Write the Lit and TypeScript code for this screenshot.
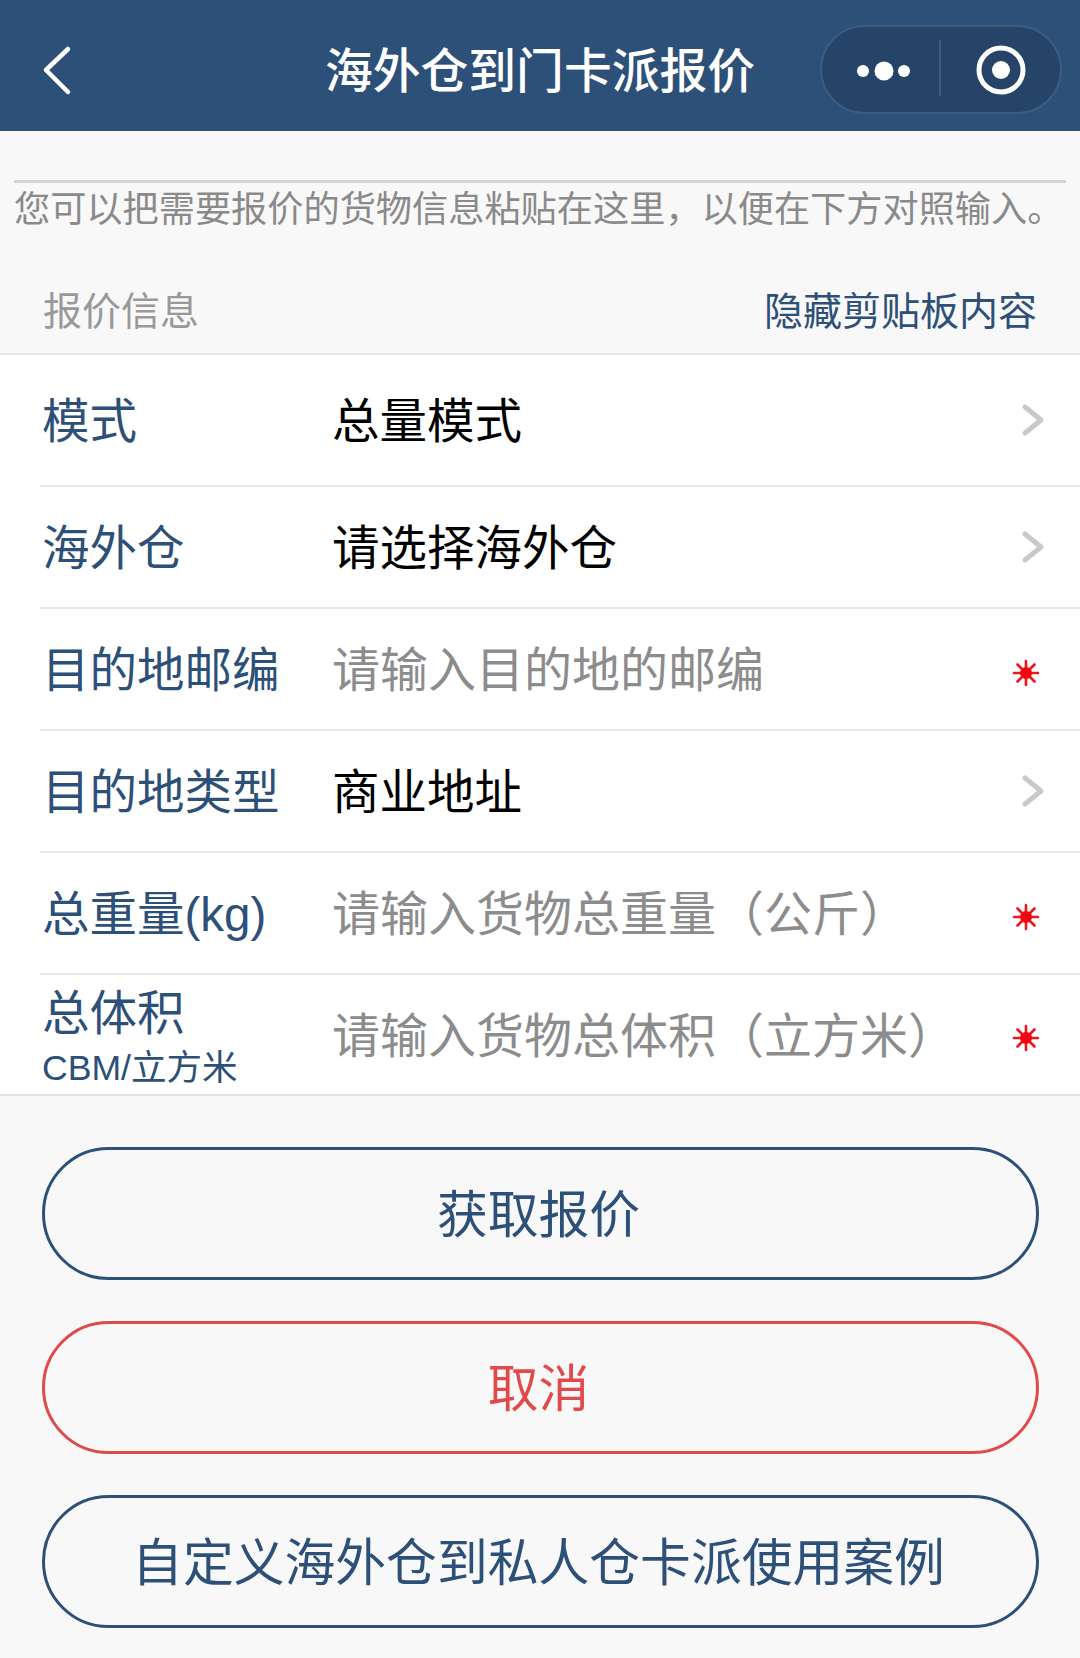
import { LitElement, html, css, svg } from "lit";
import { customElement } from "lit/decorators.js";

type Row = {
  label: string;
  sub?: string;
  value: string;
  placeholder?: boolean;
  required?: boolean;
};

const ROWS: Row[] = [
  { label: "模式", value: "总量模式" },
  { label: "海外仓", value: "请选择海外仓" },
  { label: "目的地邮编", value: "请输入目的地的邮编", placeholder: true, required: true },
  { label: "目的地类型", value: "商业地址" },
  { label: "总重量(kg)", value: "请输入货物总重量（公斤）", placeholder: true, required: true },
  { label: "总体积", sub: "CBM/立方米", value: "请输入货物总体积（立方米）", placeholder: true, required: true },
];

const chevron = html`<svg class="mark" width="26" height="36" viewBox="0 0 26 36">
  ${svg`<path d="M5 5l16 13L5 31" fill="none" stroke="#c9c9c9" stroke-width="5" stroke-linecap="round" stroke-linejoin="round" />`}
</svg>`;

const asterisk = html`<svg class="mark star" width="28" height="28" viewBox="0 0 28 28">
  ${svg`<g stroke="#f0141c" stroke-width="2.6" stroke-linecap="round">
    <path d="M14 2v24M2 14h24M5.5 5.5l17 17M22.500 5.500l-17 17" />
  </g>
  <circle cx="14" cy="14" r="6" fill="#f5050f" />`}
</svg>`;

@customElement("app-root")
export class AppRoot extends LitElement {
  static styles = css`
    :host {
      display: block;
      width: 1080px;
      height: 1658px;
      overflow: hidden;
      background: #f8f8f8;
      font-family: "Liberation Sans", "Noto Sans CJK SC", sans-serif;
    }

    .nav {
      height: 131px;
      box-sizing: border-box;
      padding-top: 4px;
      display: flex;
      align-items: center;
      justify-content: center;
      position: relative;
      background: #2d5078;
      color: #fff;
      font-size: 47.8px;
      font-weight: 500;
    }

    .back {
      position: absolute;
      left: 42px;
      top: 45px;
    }

    .capsule {
      position: absolute;
      left: 820px;
      top: 25px;
      width: 242px;
      height: 89px;
    }

    .clip {
      height: 49px;
      margin: 0 14px;
      border-bottom: 3px solid #d4d4d4;
    }

    .hint {
      padding: 0 0 0 14px;
      font-size: 36.2px;
      line-height: 54px;
      height: 54px;
      color: #8a8a8a;
      white-space: nowrap;
    }

    .section {
      height: 118px;
      box-sizing: border-box;
      padding: 45px 43px 0;
      display: flex;
      justify-content: space-between;
      font-size: 39px;
      line-height: 60px;
      color: #999;
      border-bottom: 2px solid #e6e6e6;
    }

    .section a {
      color: #2d5078;
    }

    .list {
      background: #fff;
      border-bottom: 2px solid #e2e2e2;
    }

    .row {
      height: 122px;
      margin-left: 40px;
      padding-right: 34px;
      display: flex;
      align-items: center;
      box-sizing: border-box;
      border-bottom: 2px solid #e8e8e8;
      font-size: 47.5px;
      line-height: 62px;
    }

    .row:first-child {
      height: 132px;
    }

    .row:last-child {
      height: 119px;
      border-bottom: none;
    }

    .label {
      width: 294px;
      padding: 4px 0 0 2px;
      box-sizing: border-box;
      color: #2d5078;
      white-space: nowrap;
    }

    .label small {
      display: block;
      margin-top: 4px;
      font-size: 35.6px;
      line-height: 42px;
    }

    .label span {
      display: block;
      line-height: 58px;
    }

    .value {
      flex: 1;
      padding-top: 4px;
      margin-left: -2px;
      color: #000;
      white-space: nowrap;
    }

    .value.placeholder {
      color: #8c8c8c;
      font-size: 48px;
    }

    .mark {
      display: block;
    }

    .star {
      margin-top: 7px;
      margin-right: 6px;
    }

    .actions {
      display: flex;
      flex-direction: column;
      gap: 41px;
      padding: 51px 41px 0 42px;
    }

    .btn {
      height: 133px;
      box-sizing: border-box;
      padding: 0 4px 6px 0;
      display: flex;
      align-items: center;
      justify-content: center;
      border: 3px solid #2d5078;
      border-radius: 67px;
      color: #2d5078;
      font-size: 50.8px;
    }

    .btn.cancel {
      border-color: #e04a4a;
      color: #e04a4a;
    }
  `;

  renderRow(row: Row) {
    return html`
      <div class="row">
        <div class="label">
          <span>${row.label}</span>
          ${row.sub ? html`<small>${row.sub}</small>` : ""}
        </div>
        <div class="value ${row.placeholder ? "placeholder" : ""}">${row.value}</div>
        ${row.required ? asterisk : chevron}
      </div>
    `;
  }

  render() {
    return html`
      <div class="nav">
        <svg class="back" width="32" height="52" viewBox="0 0 32 52">
          <path d="M26 4L4 25l22 22" fill="none" stroke="#fff" stroke-width="4.500" stroke-linecap="round" stroke-linejoin="round" />
        </svg>
        <span>海外仓到门卡派报价</span>
        <svg class="capsule" viewBox="0 0 242 89">
          <rect x="1" y="1" width="240" height="87" rx="43.500" fill="#264467" stroke="#3b5c85" stroke-width="2" />
          <path d="M120 15v56" stroke="#3d5c82" stroke-width="2" />
          <circle cx="43" cy="46" r="6" fill="#fff" />
          <circle cx="64" cy="46" r="9.500" fill="#fff" />
          <circle cx="84" cy="46" r="6" fill="#fff" />
          <circle cx="181" cy="45" r="22" fill="none" stroke="#fff" stroke-width="5" />
          <circle cx="181" cy="45" r="9" fill="#fff" />
        </svg>
      </div>
      <div class="clip"></div>
      <div class="hint">您可以把需要报价的货物信息粘贴在这里，以便在下方对照输入。</div>
      <div class="section">
        <span>报价信息</span>
        <a>隐藏剪贴板内容</a>
      </div>
      <div class="list">${ROWS.map((row) => this.renderRow(row))}</div>
      <div class="actions">
        <div class="btn">获取报价</div>
        <div class="btn cancel">取消</div>
        <div class="btn">自定义海外仓到私人仓卡派使用案例</div>
      </div>
    `;
  }
}
